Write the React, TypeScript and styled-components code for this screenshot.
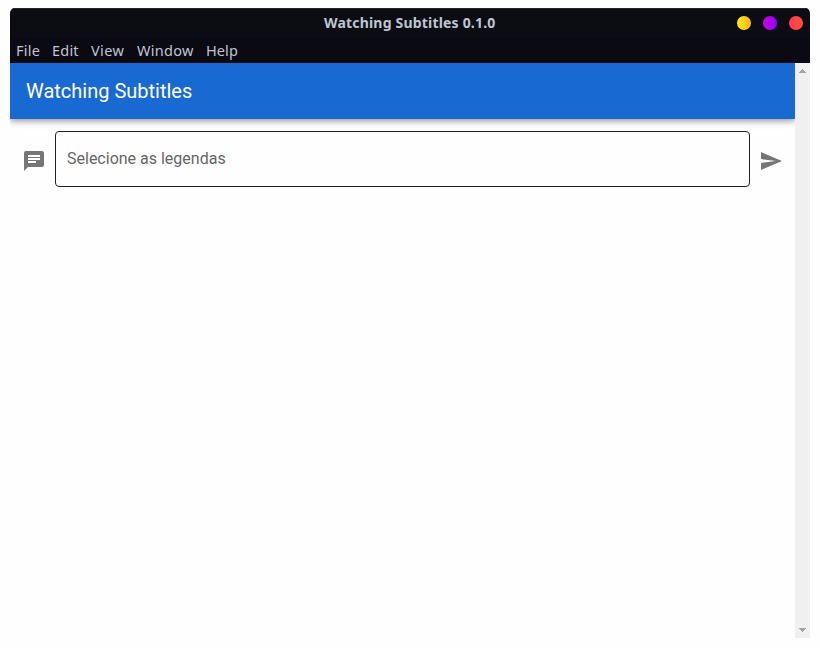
import React from 'react';
import styled, { createGlobalStyle } from 'styled-components';

const GlobalStyle = createGlobalStyle`
  * { box-sizing: border-box; }
  body { margin: 0; background: #fefefe; overflow: hidden; }
`;

const Desktop = styled.div`
  height: 648px;
  padding: 8px 10px 10px;
  background: #fefefe;
`;

const AppWindow = styled.div`
  display: flex;
  flex-direction: column;
  width: 800px;
  height: 630px;
  border-radius: 5px 5px 0 0;
  overflow: hidden;
`;

const TitleBar = styled.header`
  display: grid;
  grid-template-columns: 1fr auto 1fr;
  align-items: center;
  flex: 0 0 30px;
  padding: 0 7px 1px;
  background: #0c0d12;
  border-top: 1px solid #24252a;
`;

const WindowTitle = styled.h1`
  grid-column: 2;
  margin: 0;
  width: 172px;
  white-space: nowrap;
  font: 700 14px/28px 'Noto Sans', sans-serif;
  letter-spacing: 0.19px;
  color: #bfc5d3;
`;

const WindowControls = styled.div`
  display: flex;
  justify-content: flex-end;
  gap: 12px;
`;

const ControlDot = styled.span<{ $from: string; $to: string }>`
  width: 14px;
  height: 14px;
  border-radius: 50%;
  background: linear-gradient(90deg, ${(p) => p.$from}, ${(p) => p.$to});
`;

const MenuBar = styled.nav`
  display: flex;
  flex: 0 0 25px;
  padding-left: 6px;
  background: #0b0a12;
`;

const MenuItem = styled.span<{ $width: number; $spacing: number }>`
  flex: 0 0 ${(p) => p.$width}px;
  white-space: nowrap;
  font: 400 14.5px/24px 'Noto Sans', sans-serif;
  letter-spacing: ${(p) => p.$spacing}px;
  color: #bfc5d3;
`;

const Viewport = styled.div`
  display: flex;
  flex: 1;
  min-height: 0;
`;

const Content = styled.main`
  flex: 1;
  background: #fefefe;
  overflow: hidden;
`;

const AppBar = styled.div`
  display: flex;
  align-items: center;
  height: 56px;
  padding: 0 16px;
  background: #1969d2;
  box-shadow: 0 2px 4px -1px rgba(0, 0, 0, 0.2), 0 4px 5px 0 rgba(0, 0, 0, 0.14),
    0 1px 10px 0 rgba(0, 0, 0, 0.12);
  color: #fff;
  font: 400 20px/30px Roboto, sans-serif;
`;

const InputRow = styled.div`
  display: flex;
  align-items: flex-start;
  gap: 9px;
  padding: 12px 12px 0;
`;

const Icon = styled.svg`
  flex: 0 0 24px;
  height: 24px;
  margin-top: 18px;
  fill: #757575;
`;

const FileField = styled.div`
  flex: 1;
  height: 56px;
  padding: 0 11px;
  border: 1px solid #202020;
  border-radius: 4px;
  font: 400 16px/53px Roboto, sans-serif;
  color: #666;
`;

const ScrollTrack = styled.div`
  display: flex;
  flex-direction: column;
  justify-content: space-between;
  flex: 0 0 15px;
  background: #f0f0f0;
`;

const ScrollArrow = styled.svg`
  width: 15px;
  height: 15px;
  fill: #a3a3a3;
`;

const menu = [
  { label: 'File', width: 36, spacing: 0.25 },
  { label: 'Edit', width: 39, spacing: 0.2 },
  { label: 'View', width: 46, spacing: 0.4 },
  { label: 'Window', width: 69, spacing: 0.3 },
  { label: 'Help', width: 40, spacing: 0.1 },
];

export default function App() {
  return (
    <Desktop>
      <GlobalStyle />
      <AppWindow>
        <TitleBar>
          <WindowTitle>Watching Subtitles 0.1.0</WindowTitle>
          <WindowControls>
            <ControlDot $from="#fff000" $to="#ffb02c" />
            <ControlDot $from="#cf00dc" $to="#8a00ff" />
            <ControlDot $from="#ff3a5c" $to="#ff5030" />
          </WindowControls>
        </TitleBar>
        <MenuBar>
          {menu.map((item) => (
            <MenuItem key={item.label} $width={item.width} $spacing={item.spacing}>
              {item.label}
            </MenuItem>
          ))}
        </MenuBar>
        <Viewport>
          <Content>
            <AppBar>Watching Subtitles</AppBar>
            <InputRow>
              <Icon viewBox="0 0 24 24">
                <path d="M20 2H4A2 2 0 0 0 2 4V22L6 18H20A2 2 0 0 0 22 16V4A2 2 0 0 0 20 2M6 9H18V11H6M14 14H6V12H14M18 8H6V6H18" />
              </Icon>
              <FileField>Selecione as legendas</FileField>
              <Icon viewBox="0 0 24 24">
                <path d="M2 21L23 12L2 3V10L17 12L2 14V21Z" />
              </Icon>
            </InputRow>
          </Content>
          <ScrollTrack>
            <ScrollArrow viewBox="0 0 15 15" shapeRendering="crispEdges">
              <path d="M4 10L7.5 6L11 10Z" />
            </ScrollArrow>
            <ScrollArrow viewBox="0 0 15 15" shapeRendering="crispEdges">
              <path d="M4 5L7.5 9L11 5Z" />
            </ScrollArrow>
          </ScrollTrack>
        </Viewport>
      </AppWindow>
    </Desktop>
  );
}
